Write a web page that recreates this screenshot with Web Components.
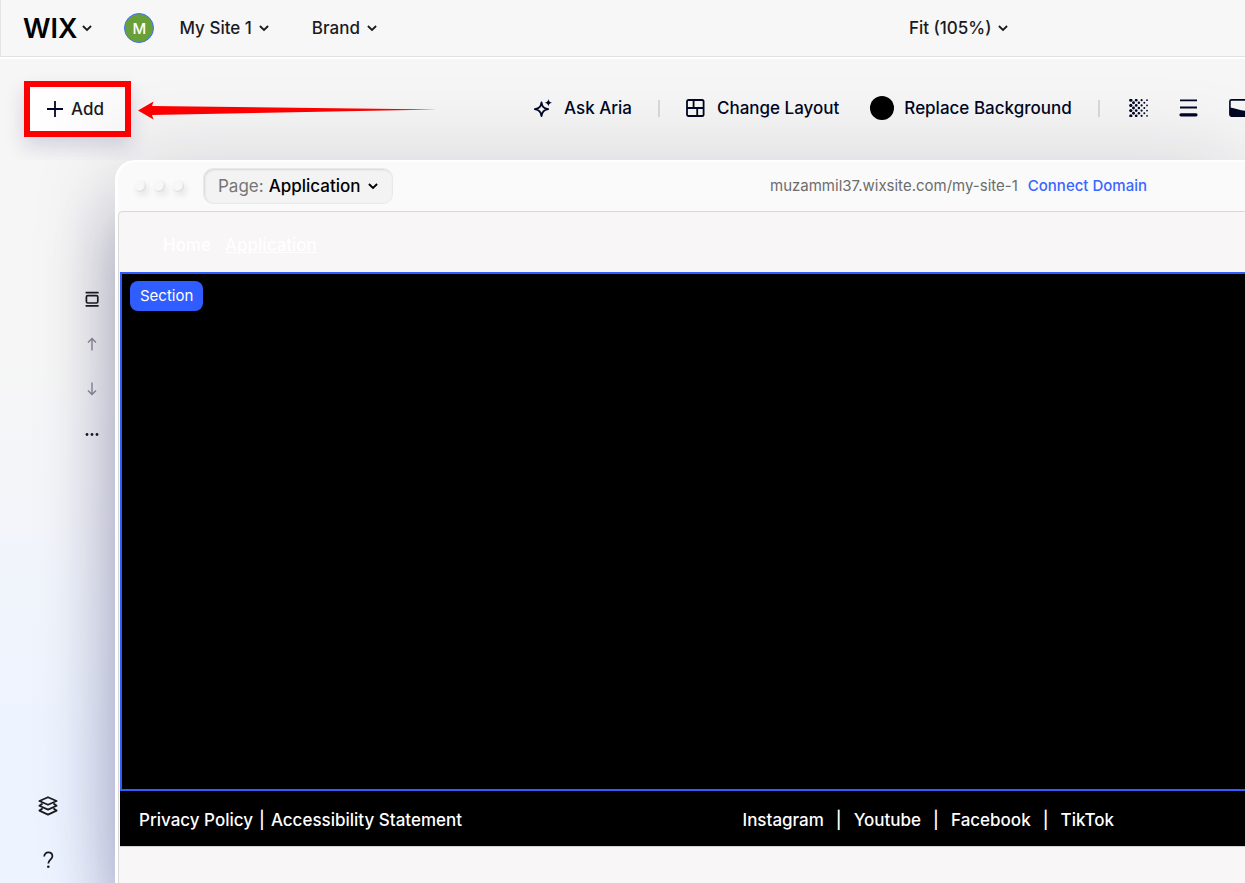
<!DOCTYPE html>
<html lang="en">
<head>
<meta charset="UTF-8">
<meta name="viewport" content="width=device-width, initial-scale=1">
<title>My Site 1 - Editor</title>
<style>
    body {
        margin: 0;
        font-family: "Inter", "Liberation Sans", sans-serif;
        font-weight: 500;
        color: #1b1b1f;
    }
</style>
</head>
<body>
<site-editor></site-editor>

<script>
// Shared by every component
const baseStyles = `
    * { box-sizing: border-box; }
    button {
        display: flex;
        align-items: center;
        flex: none;
        padding: 0;
        border: 0;
        background: none;
        font: inherit;
        color: inherit;
        white-space: nowrap;
        cursor: pointer;
    }
    a { color: inherit; text-decoration: none; white-space: nowrap; }
    svg { display: block; flex: none; }
`;

const chevron = `
    <svg width="10" height="8" viewBox="0 0 10 8" fill="none" stroke="currentColor" stroke-width="1.8" aria-hidden="true">
        <path d="M.9 2 5 6 9.1 2"/>
    </svg>
`;

const icons = {
    spark: `<path d="M8.5 3.4C9.2 7.9 10.6 9.4 15.2 10.2 10.6 11 9.2 12.6 8.5 17.2 7.8 12.6 6.4 11 1.8 10.2 6.4 9.4 7.8 7.9 8.5 3.4Z" fill="none" stroke="currentColor" stroke-width="1.8" stroke-linejoin="round"/>
        <path d="M15.4 0C15.8 2.3 16.6 3.2 19 3.7 16.6 4.2 15.8 5.1 15.4 7.4 15 5.1 14.2 4.2 11.8 3.7 14.2 3.2 15 2.3 15.4 0Z" fill="currentColor"/>`,
    layout: `<g fill="none" stroke="currentColor" stroke-width="1.8"><rect x="1" y="1" width="16.6" height="16" rx="1.6"/><path d="M1 9H18M7.6 1V9M11.2 9V17"/></g>`,
    lines: `<path d="M1 .6H18V2.2H1ZM1 7.4H18V9.6H1ZM2 14.2H17A1 1 0 0 1 17 17.4H2A1 1 0 0 1 2 14.2Z" fill="currentColor"/>`,
    divider: `<rect x=".9" y=".9" width="23" height="16.2" rx="1.6" fill="none" stroke="currentColor" stroke-width="1.6"/><path d="M1 8.6C6 9.4 11 11.6 16 11.8 19 11.9 22 11 24 10V17H1Z" fill="currentColor"/>`,
    section: `<g fill="none" stroke="currentColor" stroke-width="1.7"><rect x="3.4" y="5.6" width="11.4" height="7.4" rx="1.4"/><path d="M2.6 2.6H15.6M2.6 15.9H15.6"/></g>`,
    up: `<path d="M9 15.4V3.6M5 7.4 9 3.4 13 7.4" fill="none" stroke="currentColor" stroke-width="1.4"/>`,
    down: `<path d="M9 2.6V14.4M5 10.6 9 14.6 13 10.6" fill="none" stroke="currentColor" stroke-width="1.4"/>`,
    more: `<g fill="currentColor"><circle cx="4" cy="9.5" r="1.4"/><circle cx="9" cy="9.5" r="1.4"/><circle cx="14" cy="9.5" r="1.4"/></g>`,
    layers: `<g fill="none" stroke="currentColor" stroke-width="1.8" stroke-linejoin="round"><path d="M10 1.2 18.6 5 10 8.8 1.4 5Z"/><path d="M4.6 7.6 1.4 9.8 10 13.6 18.6 9.8 15.4 7.6M4.6 12.4 1.4 14.6 10 18.6 18.6 14.6 15.4 12.4"/></g>`,
    help: `<path d="M5.2 5.6C5.2 3 7 1.4 9.3 1.4 11.8 1.4 13.4 3 13.4 5.2 13.4 8.6 9.3 8.8 9.3 12.6" fill="none" stroke="currentColor" stroke-width="1.8"/><circle cx="9.3" cy="15.8" r="1.3" fill="currentColor"/>`
};

function icon(name, width = 18, height = 18) {
    return `<svg width="${width}" height="${height}" viewBox="0 0 ${width} ${height}" aria-hidden="true">${icons[name]}</svg>`;
}

// Dot pattern that fades towards the right
function createPattern() {
    let dots = '';
    for (let row = 0; row < 7; row++) {
        for (let col = 0; col < 7; col++) {
            if ((row + col) % 2 === 0) {
                dots += `<circle cx="${(1.8 + col * 2.7).toFixed(1)}" cy="${(1.2 + row * 2.6).toFixed(1)}" r="${(1.6 - col * 0.12).toFixed(2)}"/>`;
            }
        }
    }
    return `<svg width="19" height="18" viewBox="0 0 19 18" fill="currentColor" aria-hidden="true">${dots}</svg>`;
}

class TopBar extends HTMLElement {
    constructor() {
        super();
        this.attachShadow({ mode: 'open' });
    }

    connectedCallback() {
        this.shadowRoot.innerHTML = `
            <style>
                ${baseStyles}
                :host {
                    display: flex;
                    align-items: center;
                    height: 57px;
                    box-sizing: border-box;
                    padding: 0 19vw 0 22px;
                    border-left: 1px solid #e4e4e4;
                    border-bottom: 1px solid #e2e2e2;
                    background: #f7f7f7;
                    font-size: 17px;
                }
                button { gap: 7px; }
                .logo { gap: 5px; font-size: 27px; font-weight: 600; color: #000; margin-right: 32px; }
                .logo svg { color: #1b1b1f; }
                .avatar {
                    justify-content: center;
                    width: 30px;
                    height: 30px;
                    margin-right: 25px;
                    border: 1px solid #3f6fff;
                    border-radius: 50%;
                    background: #689f38;
                    color: #fff;
                    font-size: 15px;
                }
                .site { margin-right: 43px; }
                .zoom { margin-left: auto; }
            </style>
            <button class="logo" aria-label="WIX">WIX ${chevron}</button>
            <button class="avatar">M</button>
            <button class="site">My Site 1 ${chevron}</button>
            <button>Brand ${chevron}</button>
            <button class="zoom">Fit (105%) ${chevron}</button>
        `;
    }
}
customElements.define('top-bar', TopBar);

class ToolBar extends HTMLElement {
    constructor() {
        super();
        this.attachShadow({ mode: 'open' });
    }

    connectedCallback() {
        this.shadowRoot.innerHTML = `
            <style>
                ${baseStyles}
                :host {
                    display: flex;
                    align-items: flex-start;
                    height: 103px;
                    box-sizing: border-box;
                    padding: 22px 0 0 24px;
                    border-top: 2px solid #fff;
                    overflow: hidden;
                    font-size: 17px;
                    color: #000624;
                }
                .add {
                    gap: 8px;
                    justify-content: center;
                    width: 107px;
                    height: 56px;
                    padding-right: 4px;
                    border: 6px solid #f00;
                    background: linear-gradient(90deg, #fff, #fafafa);
                    box-shadow: 0 10px 20px rgba(30, 30, 110, .16);
                    color: #1b1b1f;
                }
                .add svg { color: #000624; }
                .arrow { margin: 19px 96px 0 7px; }
                .tools { display: flex; align-items: center; flex: none; height: 54px; }
                .tools button { gap: 12px; }
                .tools hr { width: 2px; height: 17px; margin: 0 26px; border: 0; background: #d9d9dc; }
                .tools .replace { gap: 10px; margin-left: 31px; }
                .swatch { width: 24px; height: 24px; border-radius: 50%; background: #000; }
                .icons { display: flex; gap: 31px; padding-left: 3px; }
            </style>
            <button class="add">
                <svg width="16" height="16" viewBox="0 0 16 16" stroke="currentColor" stroke-width="1.8" aria-hidden="true"><path d="M0 8H16M8 0V16"/></svg>
                Add
            </button>
            <svg class="arrow" width="299" height="20" viewBox="0 0 299 20" fill="#f00" aria-hidden="true">
                <path d="M0 10.5 15.5 1.5 14 6 299 9.6 14 15 15.5 19.5Z"/>
            </svg>
            <div class="tools">
                <button>${icon('spark', 19, 19)} Ask Aria</button>
                <hr>
                <button>${icon('layout', 19, 18)} Change Layout</button>
                <button class="replace"><span class="swatch"></span> Replace Background</button>
                <hr>
                <div class="icons">
                    <button aria-label="Pattern">${createPattern()}</button>
                    <button aria-label="Align">${icon('lines', 19, 18)}</button>
                    <button aria-label="Section divider">${icon('divider', 25, 18)}</button>
                </div>
            </div>
        `;
    }
}
customElements.define('tool-bar', ToolBar);

class SideRail extends HTMLElement {
    constructor() {
        super();
        this.attachShadow({ mode: 'open' });
    }

    connectedCallback() {
        this.shadowRoot.innerHTML = `
            <style>
                ${baseStyles}
                :host {
                    display: flex;
                    flex-direction: column;
                    justify-content: space-between;
                    width: 115px;
                    flex: none;
                    box-sizing: border-box;
                    padding: 124px 8px 8px 33px;
                }
                div { display: flex; flex-direction: column; }
                button { justify-content: center; width: 30px; height: 30px; }
                .section { align-items: flex-end; gap: 15px; }
                .page { align-items: flex-start; gap: 24px; }
                .dim { color: #8c8c98; }
            </style>
            <div class="section">
                <button aria-label="Section">${icon('section')}</button>
                <button class="dim" aria-label="Move up">${icon('up')}</button>
                <button class="dim" aria-label="Move down">${icon('down')}</button>
                <button aria-label="More">${icon('more')}</button>
            </div>
            <div class="page">
                <button aria-label="Layers">${icon('layers', 20, 20)}</button>
                <button aria-label="Help">${icon('help')}</button>
            </div>
        `;
    }
}
customElements.define('side-rail', SideRail);

class PageFrame extends HTMLElement {
    constructor() {
        super();
        this.attachShadow({ mode: 'open' });
    }

    connectedCallback() {
        this.shadowRoot.innerHTML = `
            <style>
                ${baseStyles}
                :host {
                    display: flex;
                    flex-direction: column;
                    flex: 1;
                    min-width: 0;
                    box-sizing: border-box;
                    border: solid #fff;
                    border-width: 2px 0 0 3px;
                    border-radius: 20px 0 0 0;
                    background: #fafafa;
                    box-shadow: -2px 60px 60px rgba(30, 25, 100, .3), 0 0 90px rgba(20, 20, 50, .14);
                }
                header {
                    display: flex;
                    align-items: center;
                    height: 49px;
                    padding: 0 98px 2px 16px;
                }
                .dots { display: flex; gap: 7px; margin-right: 19px; }
                .dots span {
                    width: 12px;
                    height: 12px;
                    border-radius: 50%;
                    background: #f7f7f7;
                    box-shadow: inset -1px -1px 1px #dcdcdc, 3px 4px 6px rgba(0, 0, 0, .08);
                }
                label {
                    display: flex;
                    align-items: center;
                    gap: 5px;
                    height: 36px;
                    padding: 0 14px;
                    border: 1px solid #e9e9e9;
                    border-radius: 10px;
                    background: #f3f3f3;
                    box-shadow: inset 1px 1px 2px #d8d8d8;
                    font-size: 17px;
                    font-weight: 400;
                    color: #767676;
                }
                select {
                    appearance: none;
                    field-sizing: content;
                    padding: 0;
                    border: 0;
                    background: none;
                    font: inherit;
                    font-weight: 500;
                    color: #000;
                }
                label svg { color: #000; margin-left: 3px; }
                .url { margin-left: auto; font-size: 15px; font-weight: 400; color: #6c6c6c; }
                .connect { margin-left: 10px; font-size: 15px; color: #3b66ff; }
                main {
                    flex: 1;
                    border: solid #d9d9d9;
                    border-width: 1px 0 0 1px;
                    border-radius: 5px 0 0 0;
                    background: #f8f6f7;
                }
            </style>
            <header>
                <div class="dots"><span></span><span></span><span></span></div>
                <label>Page: <select><option>Application</option></select>${chevron}</label>
                <span class="url">muzammil37.wixsite.com/my-site-1</span>
                <a class="connect" href="#">Connect Domain</a>
            </header>
            <main><slot></slot></main>
        `;
    }
}
customElements.define('page-frame', PageFrame);

class SitePage extends HTMLElement {
    constructor() {
        super();
        this.attachShadow({ mode: 'open' });
    }

    connectedCallback() {
        this.shadowRoot.innerHTML = `
            <style>
                ${baseStyles}
                :host { display: block; margin-left: 1px; font-size: 17px; color: #fff; }
                nav {
                    display: flex;
                    align-items: center;
                    gap: 14px;
                    height: 60px;
                    padding: 5px 43px 0;
                }
                .current { text-decoration: underline; }
                section {
                    min-height: 519px;
                    padding: 7px 8px;
                    border: solid #2f5dff;
                    border-width: 2px 0 2px 2px;
                    background: #000;
                }
                .tag {
                    height: 30px;
                    padding: 0 10px 1px;
                    border-radius: 8px;
                    background: #2f5dff;
                    font-weight: 400;
                    font-size: 15px;
                }
                footer {
                    display: flex;
                    align-items: center;
                    justify-content: space-between;
                    height: 56px;
                    padding: 2px 131px 0 19px;
                    border-bottom: 1px solid #d4d0d2;
                    background: #000;
                }
                footer div { display: flex; gap: 6px; }
                footer .social { gap: 12px; }
            </style>
            <nav><a href="#">Home</a><a class="current" href="#">Application</a></nav>
            <section><button class="tag">Section</button></section>
            <footer>
                <div><a href="#">Privacy Policy</a><span>|</span><a href="#">Accessibility Statement</a></div>
                <div class="social"><a href="#">Instagram</a><span>|</span><a href="#">Youtube</a><span>|</span><a href="#">Facebook</a><span>|</span><a href="#">TikTok</a></div>
            </footer>
        `;
    }
}
customElements.define('site-page', SitePage);

class SiteEditor extends HTMLElement {
    constructor() {
        super();
        this.attachShadow({ mode: 'open' });
    }

    connectedCallback() {
        this.shadowRoot.innerHTML = `
            <style>
                :host {
                    display: flex;
                    flex-direction: column;
                    min-height: 100vh;
                    overflow: hidden;
                    background: linear-gradient(#f6f6f6 40%, #edf3ff 85%);
                }
                .stage { display: flex; flex: 1; }
            </style>
            <top-bar></top-bar>
            <tool-bar></tool-bar>
            <div class="stage">
                <side-rail></side-rail>
                <page-frame><site-page></site-page></page-frame>
            </div>
        `;
    }
}
customElements.define('site-editor', SiteEditor);
</script>
</body>
</html>
